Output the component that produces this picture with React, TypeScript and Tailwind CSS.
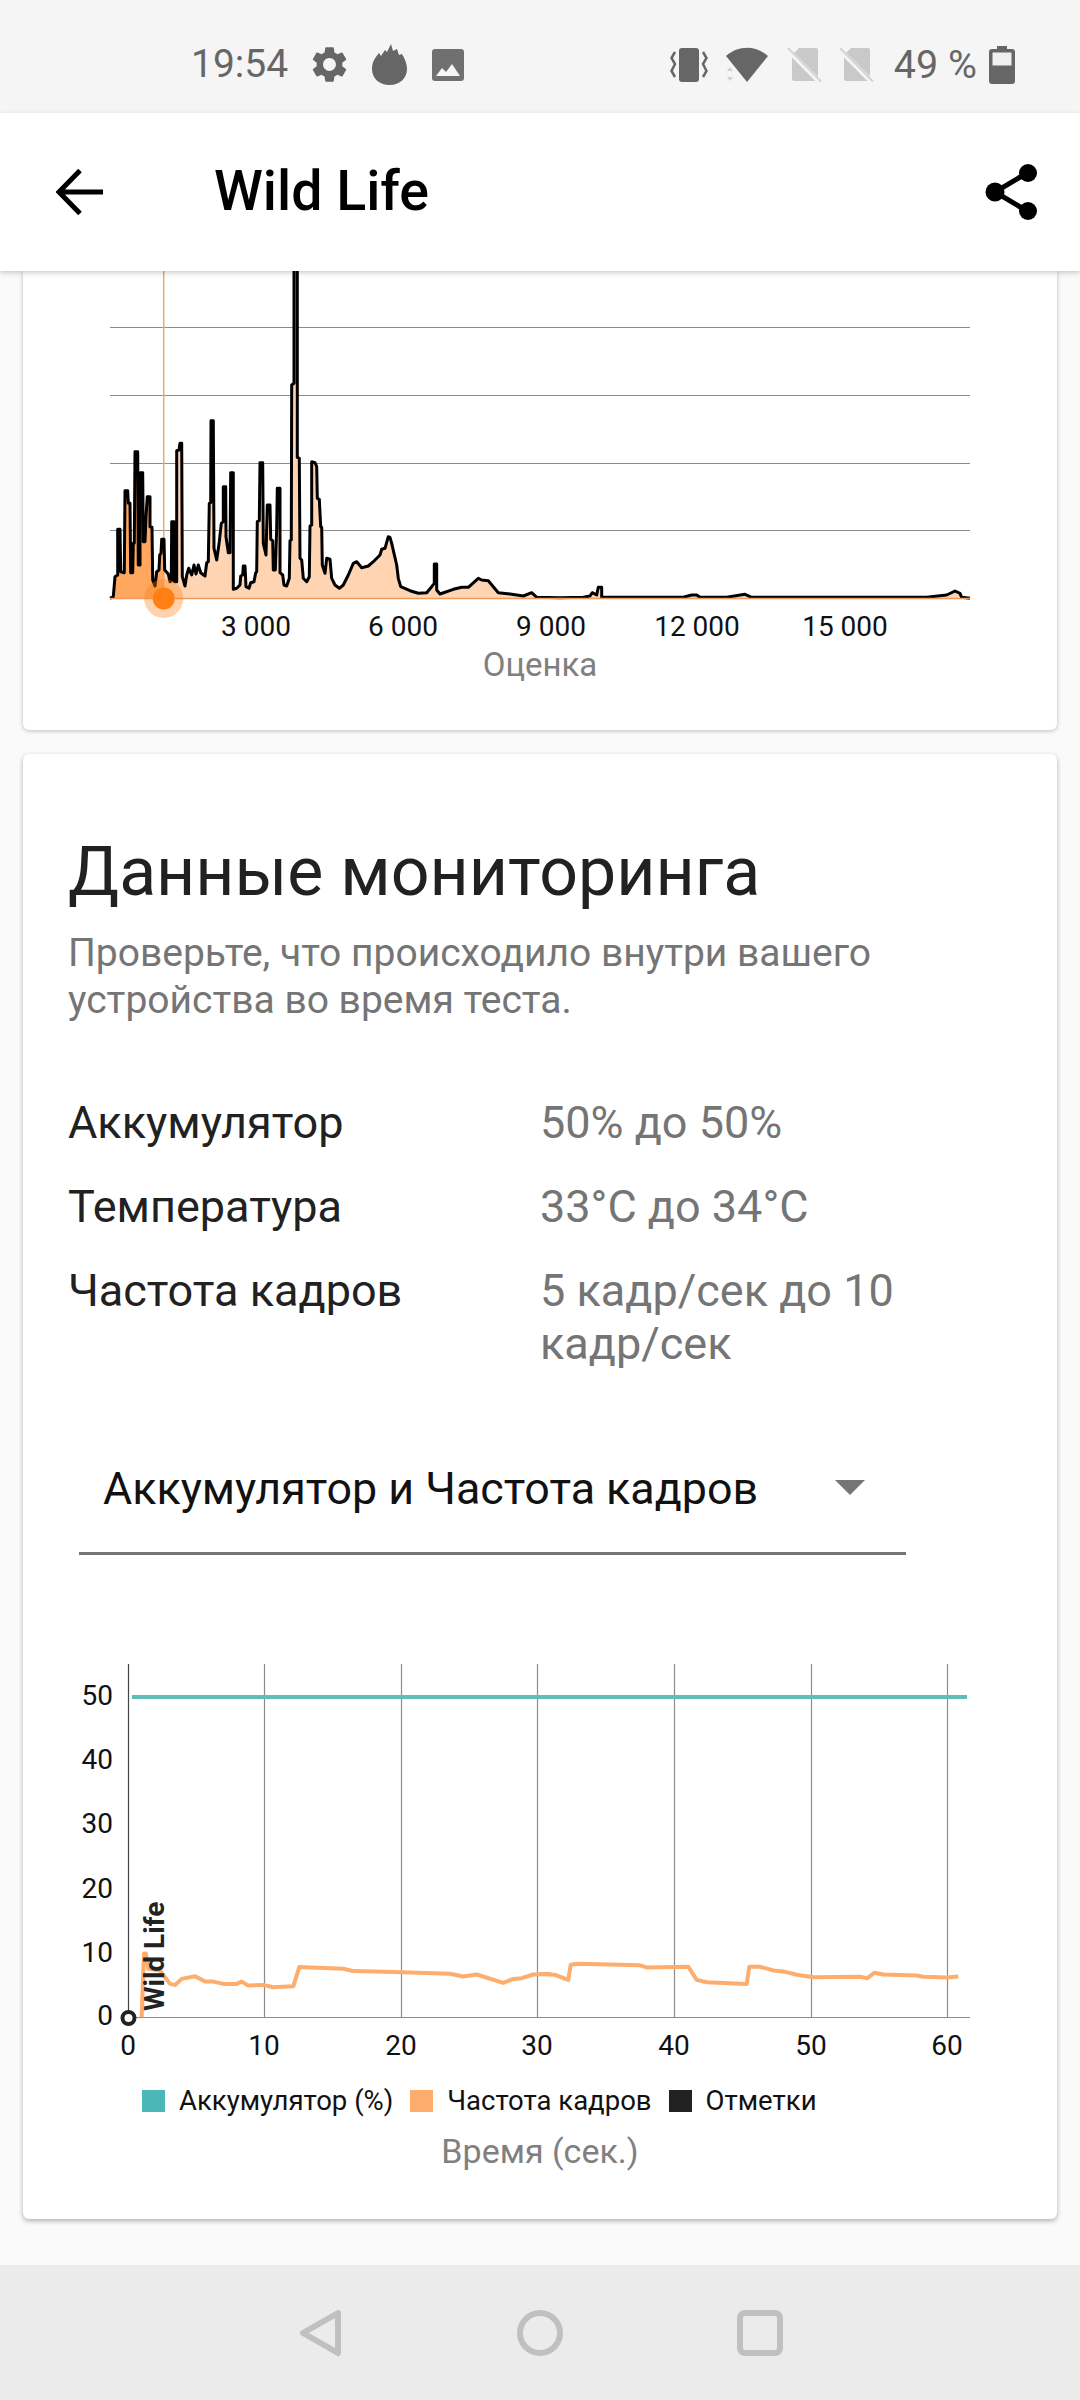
import React from "react";
import { MdSettings } from "react-icons/md";

const histA: number[][] = [[60,985],[70,980],[75,920],[83,915],[83,778],[90,778],[92,905],[103,908],[105,662],[113,662],[115,700],[120,700],[122,908],[128,908],[130,820],[133,820],[135,545],[143,545],[145,885],[150,885],[150,608],[158,608],[160,815],[165,815],[168,740],[172,680],[180,680],[180,770],[186,772],[188,930],[195,948],[200,905],[207,900],[209,855],[213,850],[215,808],[222,808],[224,900],[235,912],[240,935],[244,932],[245,755],[252,755],[253,935],[260,935],[260,542],[267,540],[270,520],[275,520],[277,920],[285,948],[290,915],[296,895],[305,915],[312,885],[318,912],[325,885],[332,908],[345,918],[350,878],[355,875],[358,700],[362,698],[363,452],[370,452],[372,835],[380,870],[388,815],[394,760],[400,755],[400,650],[407,650],[408,800],[415,848],[420,848],[422,608],[430,608],[430,958],[440,955],[450,945],[452,918],[458,915],[460,888],[465,888],[468,950],[477,955],[482,938],[492,935],[497,908],[500,905],[502,755],[508,752],[510,578],[518,578],[520,820],[528,855],[532,705],[540,705],[542,808],[548,812],[550,900],[556,900],[560,775],[562,655],[570,655],[570,908],[578,915],[582,945],[590,948],[598,925],[600,812],[604,810],[605,345],[612,340],[612,-10],[622,-10],[622,562],[628,565],[630,865],[635,870],[640,925],[650,935],[658,920],[660,768],[665,765],[665,575],[675,578],[680,590],[682,685],[688,688],[692,770],[695,772],[697,885],[705,910],[710,865],[720,868],[725,925],[735,945],[748,955],[760,945],[775,915],[790,880],[800,875],[815,893],[835,888],[850,875],[870,855],[875,838],[885,835],[895,800],[900,802],[905,820],[912,850],[920,885],[925,925],[932,950],[960,962],[985,970],[1010,968],[1025,950],[1033,940],[1033,882],[1040,882],[1040,960],[1050,972],[1090,958],[1115,952],[1135,952],[1165,925],[1175,930],[1195,932],[1225,968],[1260,972],[1300,978],[1325,968],[1340,982],[1410,983]];
const histB: number[][] = [[0,983],[70,982],[90,978],[97,968],[110,975],[115,952],[125,952],[125,982],[370,982],[395,975],[410,975],[420,982],[500,982],[555,973],[575,982],[1100,982],[1160,975],[1185,963],[1200,970],[1205,982],[1230,985]];
const histPts = [
  ...histA.map(([x, y]) => [90 + x / 3, 270 + y / 3]),
  ...histB.map(([x, y]) => [560 + x / 3, 270 + y / 3]),
];
const histLine = histPts.map(([x, y], i) => `${i ? "L" : "M"}${x.toFixed(1)} ${y.toFixed(1)}`).join(" ");

const fpsA: number[][] = [[245,1083],[252,895],[258,895],[265,940],[300,945],[315,965],[330,985],[345,988],[365,970],[405,962],[435,978],[460,978],[490,985],[530,985],[545,978],[565,990],[610,988],[640,995],[700,992],[718,935],[850,940],[880,947],[1000,950],[1170,955],[1210,963],[1250,957],[1330,982],[1360,970],[1385,968],[1420,957],[1470,956]];
const fpsB: number[][] = [[0,956],[45,958],[85,973],[92,928],[115,925],[300,930],[320,936],[445,934],[470,973],[500,980],[620,985],[628,934],[660,934],[700,945],[730,948],[770,958],[820,965],[960,964],[982,968],[1003,952],[1030,957],[1130,960],[1150,964],[1220,966],[1255,963]];
const fpsPts = [
  ...fpsA.map(([x, y]) => [60 + x / 3, 1650 + y * 0.338]),
  ...fpsB.map(([x, y]) => [540 + x / 3, 1650 + y * 0.338]),
];
const fpsLine = fpsPts.map(([x, y], i) => `${i ? "L" : "M"}${x.toFixed(1)} ${y.toFixed(1)}`).join(" ");

function SimOff() {
  return (
    <svg width="36" height="36" viewBox="0 0 36 36" className="block">
      <path d="M13 1H30a2 2 0 0 1 2 2V32a2 2 0 0 1-2 2H8a2 2 0 0 1-2-2V8Z" fill="#c9c9c9" />
      <path d="M1 2L35 36" stroke="#f5f5f5" strokeWidth="5" />
      <path d="M2 1L35 34.500" stroke="#d4d4d4" strokeWidth="2" />
    </svg>
  );
}

function StatusBar() {
  return (
    <div className="h-[113px] shrink-0 bg-[#f5f5f5] flex items-center pl-[191px] pr-[65px] pt-[16px] text-[#666666] text-[39px]">
      <span className="leading-none">19:54</span>
      <MdSettings className="ml-[20px] w-[43px] h-[43px] text-[#666666]" />
      <svg width="35" height="41" viewBox="0 0 35 41" className="ml-[21px] block">
        <path d="M17.500 41C7 41 0 34 0 25C0 17 4 13 7 9L9 12L13 6L15 8L19 0L21 7L25 5L27 11L30 10C33 15 35 20 35 25C35 34 28 41 17.500 41Z" fill="#666666" />
      </svg>
      <svg width="32" height="32" viewBox="0 0 32 32" className="ml-[25px] block">
        <rect width="32" height="32" rx="3" fill="#707070" />
        <path d="M4 27L10 19L14 23L20 15L28 27Z" fill="#f5f5f5" />
      </svg>
      <div className="flex-1" />
      <svg width="38" height="36" viewBox="0 0 38 36" className="block">
        <rect x="9" y="1" width="20" height="34" rx="3" fill="#666666" />
        <path d="M5 5L1.500 11L5 17L1.500 24L5 30" fill="none" stroke="#666666" strokeWidth="2.500" />
        <path d="M33 5L36.500 11L33 17L36.500 24L33 30" fill="none" stroke="#666666" strokeWidth="2.500" />
      </svg>
      <svg width="44" height="36" viewBox="0 0 44 36" className="ml-[17px] block">
        <path d="M1 9C13 -2 31 -2 43 9L22 35Z" fill="#666666" />
        <path d="M5 20L8 24H2Z M2 30H8L5 34Z" fill="#cfcfcf" />
      </svg>
      <div className="ml-[17px]"><SimOff /></div>
      <div className="ml-[16px]"><SimOff /></div>
      <span className="ml-[20px] leading-none text-[39.500px] whitespace-pre">49 %</span>
      <svg width="26" height="38" viewBox="0 0 26 38" className="ml-[12px] block">
        <path d="M8 0H18V3H23a3 3 0 0 1 3 3V35a3 3 0 0 1-3 3H3a3 3 0 0 1-3-3V6a3 3 0 0 1 3-3H8Z" fill="#666666" />
        <rect x="3.500" y="6.500" width="19" height="13" fill="#f0f0f0" />
      </svg>
    </div>
  );
}

function AppBar() {
  return (
    <div className="relative z-10 h-[158px] shrink-0 bg-white shadow-[0_2px_5px_rgba(0,0,0,0.2)] flex items-center pl-[56px] pr-[41px]">
      <svg width="47" height="46" viewBox="0 0 47 46" className="block">
        <path d="M47 23H4M24 1.500L3 23L24 44.500" fill="none" stroke="#000000" strokeWidth="5" />
      </svg>
      <span className="ml-[111px] text-[55.500px] font-medium text-black leading-none">Wild Life</span>
      <div className="flex-1" />
      <svg width="54" height="58" viewBox="0 0 54 58" className="block">
        <path d="M42 10L10 29L42 48" fill="none" stroke="#000000" strokeWidth="5" />
        <circle cx="43" cy="10" r="9" fill="#000000" />
        <circle cx="10" cy="29" r="9.500" fill="#000000" />
        <circle cx="43" cy="48" r="9" fill="#000000" />
      </svg>
    </div>
  );
}

function ScoreChart() {
  return (
    <svg width="1034" height="374" viewBox="23 271 1034 374" className="block" style={{ fontFamily: "Roboto, sans-serif" }}>
      <defs>
        <clipPath id="leftPart"><rect x="23" y="271" width="141" height="374" /></clipPath>
      </defs>
      {[327, 395, 463, 530].map((y) => (
        <line key={y} x1="110" x2="970" y1={y + 0.5} y2={y + 0.5} stroke="#8c8c8c" strokeWidth="1.200" />
      ))}
      <path d={`${histLine} Z`} fill="#ffd4b3" />
      <path d={`${histLine} Z`} fill="#ffa65f" clipPath="url(#leftPart)" />
      <line x1="163.700" x2="163.700" y1="271" y2="598" stroke="#e6ab70" strokeWidth="1.500" />
      <path d={histLine} fill="none" stroke="#000000" strokeWidth="3" strokeLinejoin="round" />
      <line x1="110" x2="970" y1="598.500" y2="598.500" stroke="#ec9a5e" strokeWidth="1.500" />
      <circle cx="163.700" cy="598.500" r="19.500" fill="#ff7f14" fillOpacity="0.35" />
      <circle cx="163.700" cy="598.500" r="11" fill="#ff7f14" />
      {[["3 000", 256], ["6 000", 403], ["9 000", 551], ["12 000", 697], ["15 000", 845]].map(([t, x]) => (
        <text key={t as string} x={x as number} y="636" textAnchor="middle" fontSize="28" fill="#111111">{t}</text>
      ))}
    </svg>
  );
}

function MonitorChart() {
  const gx = [264, 401, 537, 674, 811, 947];
  const labels = [["10", 264], ["20", 401], ["30", 537], ["40", 674], ["50", 811], ["60", 947]];
  const ys = [["50", 1693.5], ["40", 1757.5], ["30", 1821.5], ["20", 1886.5], ["10", 1950.5], ["0", 2013.5]];
  return (
    <svg width="1034" height="416" viewBox="23 1650 1034 416" className="block" style={{ fontFamily: "Roboto, sans-serif" }}>
      <line x1="128.500" x2="128.500" y1="1663" y2="2016" stroke="#444444" strokeWidth="1.200" />
      {gx.map((x) => (
        <line key={x} x1={x + 0.5} x2={x + 0.5} y1="1663" y2="2016" stroke="#8c8c8c" strokeWidth="1.200" />
      ))}
      <line x1="128" x2="970" y1="2016.500" y2="2016.500" stroke="#8c8c8c" strokeWidth="1.200" />
      <line x1="132" x2="967" y1="1696" y2="1696" stroke="#5cbdb9" strokeWidth="4" />
      <path d={fpsLine} fill="none" stroke="#ffad6d" strokeWidth="4" strokeLinejoin="round" />
      <circle cx="128.500" cy="2017" r="6" fill="#ffffff" stroke="#222222" strokeWidth="4" />
      <text x="0" y="0" transform="translate(164 2010) rotate(-90)" fontSize="28" fontWeight="700" fill="#222222">Wild Life</text>
      {ys.map(([t, y]) => (
        <text key={t as string} x="113" y={(y as number) + 10} textAnchor="end" fontSize="28" fill="#111111">{t}</text>
      ))}
      <text x="128" y="2054" textAnchor="middle" fontSize="28" fill="#111111">0</text>
      {labels.map(([t, x]) => (
        <text key={t as string} x={x as number} y="2054" textAnchor="middle" fontSize="28" fill="#111111">{t}</text>
      ))}
    </svg>
  );
}

function Row({ label, value }: { label: string; value: React.ReactNode }) {
  return (
    <div className="flex text-[45px] leading-[53px]">
      <div className="w-[472px] shrink-0 text-[#212121]">{label}</div>
      <div className="w-[400px] text-[#757575]">{value}</div>
    </div>
  );
}

function Legend({ color, label }: { color: string; label: string }) {
  return (
    <div className="flex items-center gap-[14px]">
      <span className="w-[23px] h-[22px]" style={{ background: color }} />
      <span className="text-[27.500px] leading-[32px] text-[#111111] whitespace-nowrap">{label}</span>
    </div>
  );
}

function NavBar() {
  return (
    <div className="h-[135px] shrink-0 bg-[#ebebeb] flex items-center justify-center gap-[174px] pl-[2px]">
      <svg width="44" height="48" viewBox="0 0 44 48" className="block">
        <path d="M39 4L4 24L39 44Z" fill="none" stroke="#c0c0c0" strokeWidth="6" strokeLinejoin="round" />
      </svg>
      <svg width="46" height="46" viewBox="0 0 46 46" className="block">
        <circle cx="23" cy="23" r="20" fill="none" stroke="#c0c0c0" strokeWidth="6" />
      </svg>
      <svg width="46" height="46" viewBox="0 0 46 46" className="block">
        <rect x="3" y="3" width="40" height="40" rx="5" fill="none" stroke="#c0c0c0" strokeWidth="6" />
      </svg>
    </div>
  );
}

export default function App() {
  return (
    <div className="w-[1080px] h-[2400px] flex flex-col overflow-hidden bg-[#fafafa]" style={{ fontFamily: "Roboto, sans-serif" }}>
      <StatusBar />
      <AppBar />
      <main className="flex-1 px-[23px] flex flex-col gap-[24px]">
        <section className="h-[459px] shrink-0 bg-white rounded-b-[6px] shadow-[0_1px_4px_rgba(0,0,0,0.25)] flex flex-col">
          <ScoreChart />
          <div className="text-center text-[33px] leading-[40px] text-[#808080]">Оценка</div>
        </section>
        <section className="h-[1465px] shrink-0 bg-white rounded-[6px] shadow-[0_2px_5px_rgba(0,0,0,0.3)] flex flex-col pt-[81px]">
          <h2 className="pl-[45px] text-[68px] leading-[74px] text-[#212121]">Данные мониторинга</h2>
          <p className="pl-[45px] pr-[100px] mt-[21px] text-[39px] leading-[47px] text-[#757575]">
            Проверьте, что происходило внутри вашего устройства во время теста.
          </p>
          <div className="pl-[45px] mt-[72px] flex flex-col gap-[31px]">
            <Row label="Аккумулятор" value="50% до 50%" />
            <Row label="Температура" value="33°C до 34°C" />
            <Row label="Частота кадров" value="5 кадр/сек до 10 кадр/сек" />
          </div>
          <div className="ml-[56px] w-[827px] mt-[92px] h-[93px] border-b-[3px] border-[#757575] flex items-start pl-[24px] pr-[41px]">
            <span className="flex-1 text-[44.800px] leading-[53px] text-[#111111]">Аккумулятор и Частота кадров</span>
            <span className="mt-[18px] w-0 h-0 border-l-[15px] border-r-[15px] border-t-[15px] border-l-transparent border-r-transparent border-t-[#757575]" />
          </div>
          <div className="mt-[96px]">
            <MonitorChart />
          </div>
          <div className="pl-[119px] mt-[18px] flex items-center gap-[17px]">
            <Legend color="#4db6b6" label="Аккумулятор (%)" />
            <Legend color="#ffad6d" label="Частота кадров" />
            <Legend color="#222222" label="Отметки" />
          </div>
          <div className="text-center text-[34px] leading-[38px] text-[#808080] mt-[15px]">Время (сек.)</div>
        </section>
      </main>
      <NavBar />
    </div>
  );
}
